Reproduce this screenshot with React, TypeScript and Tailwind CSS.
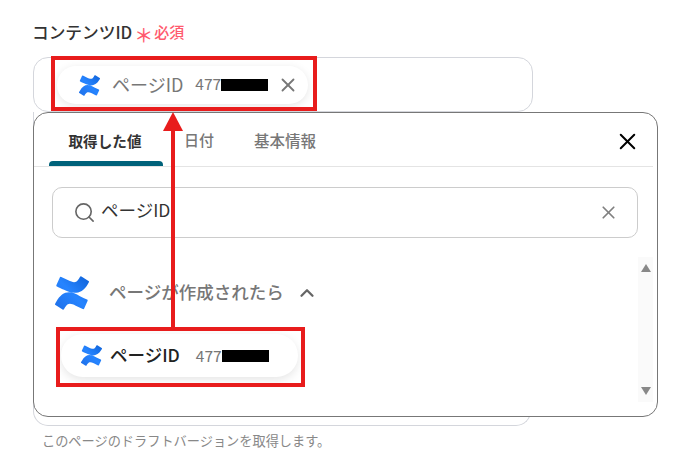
import { useId } from "react";
import { X, Search, ChevronUp } from "lucide-react";

const font = { fontFamily: '"Noto Sans CJK JP", "Noto Sans", sans-serif' };

function ConfluenceLogo({ className }: { className: string }) {
  const id = useId();
  return (
    <svg viewBox="0 0 24 24" className={className}>
      <defs>
        <linearGradient id={id} x1="0" y1="1" x2="1" y2="0">
          <stop offset="0" stopColor="#1f6fe8" />
          <stop offset="0.5" stopColor="#2684ff" />
          <stop offset="1" stopColor="#0f62d8" />
        </linearGradient>
      </defs>
      <path
        fill={`url(#${id})`}
        d="M.87 18.257c-.248.382-.53.875-.763 1.245a.764.764 0 0 0 .255 1.04l4.965 3.054a.764.764 0 0 0 1.058-.26c.199-.332.454-.763.733-1.221 1.967-3.247 3.945-2.853 7.508-1.146l4.957 2.337a.764.764 0 0 0 1.028-.382l2.364-5.346a.764.764 0 0 0-.382-1 599.851 599.851 0 0 1-4.965-2.361C10.911 9.861 5.16 10.1.87 18.257zM23.131 5.743c.248-.382.53-.875.763-1.245a.764.764 0 0 0-.256-1.04L18.673.404a.764.764 0 0 0-1.058.26c-.199.332-.454.763-.733 1.221-1.967 3.247-3.945 2.853-7.508 1.146L4.417.694a.764.764 0 0 0-1.028.382L1.025 6.422a.764.764 0 0 0 .382 1c1.04.49 3.11 1.472 4.965 2.361 6.712 3.355 12.47 3.116 16.759-4.04z"
      />
    </svg>
  );
}

function Redacted() {
  return <span className="h-[12px] w-[47px] bg-black" />;
}

function Dropdown() {
  return (
    <div className="absolute left-[33px] top-[112px] h-[305px] w-[625px] rounded-[15px] border border-[#777777] bg-white">
      {/* tabs */}
      <div className="relative mr-[4px] flex h-[54px] items-start border-b border-[#e4e4e4] pl-[15px]">
        <div className="flex h-[53px] w-[114px] items-center justify-center pt-[2px] pr-[2px] text-[14.6px] font-bold text-[#333333]">
          取得した値
        </div>
        <div className="ml-[21px] flex h-[53px] items-center pt-[2px] text-[15px] font-medium text-[#777777]">日付</div>
        <div className="ml-[40px] flex h-[53px] items-center pt-[2px] text-[15.5px] font-medium text-[#777777]">基本情報</div>
        <div className="absolute left-[15px] top-[48px] h-[5px] w-[114px] rounded-t-[4px] bg-[#00627a]" />
        <X className="absolute left-[580px] top-[15px] h-[27px] w-[27px] text-black" strokeWidth={1.8} />
      </div>

      {/* search */}
      <div className="ml-[18px] mt-[20px] flex h-[51px] w-[586px] items-center rounded-[10px] border border-[#cccccc] pl-[20px]">
        <Search className="h-[23px] w-[23px] text-[#666666]" strokeWidth={1.7} />
        <span className="mb-[6px] ml-[5px] text-[17.5px] leading-[24px] text-[#333333]">ページID</span>
        <X className="ml-auto mr-[18px] h-[21px] w-[21px] text-[#808080]" strokeWidth={2} />
      </div>

      {/* group header */}
      <div className="ml-[21px] mt-[38px] flex h-[34px] items-center">
        <ConfluenceLogo className="h-[34px] w-[34px]" />
        <span className="mb-[2px] ml-[20px] text-[17.5px] leading-[24px] font-medium text-[#777777]">ページが作成されたら</span>
        <ChevronUp className="ml-[12px] h-[22px] w-[22px] text-[#666666]" strokeWidth={2.5} />
      </div>

      {/* result chip */}
      <div className="ml-[27px] mt-[24px] flex h-[43px] w-[237px] items-center rounded-full bg-white pl-[20px] shadow-[0_3px_10px_rgba(0,0,0,0.1)]">
        <ConfluenceLogo className="h-[21px] w-[21px]" />
        <span className="mb-[2px] ml-[8px] text-[17.5px] leading-[24px] font-medium text-[#222222]">ページID</span>
        <span className="mb-[2px] ml-[16px] text-[15.5px] leading-[20px] text-[#777777]">477</span>
        <Redacted />
      </div>

      {/* scrollbar */}
      <div className="absolute left-[604px] top-[144px] flex h-[145px] w-[15px] flex-col items-center justify-between bg-[#fafafa] py-[7px]">
        <span className="h-0 w-0 border-x-[5px] border-b-[8px] border-x-transparent border-b-[#888888]" />
        <span className="h-0 w-0 border-x-[5px] border-t-[8px] border-x-transparent border-t-[#888888]" />
      </div>
    </div>
  );
}

function Annotations() {
  return (
    <>
      <div className="absolute left-[51px] top-[56px] h-[55px] w-[266px] border-[4px] border-[#e81c1c]" />
      <div className="absolute left-[56px] top-[327px] h-[60px] w-[249px] border-[4px] border-[#e81c1c]" />
      <div className="absolute left-[171px] top-[128px] h-[200px] w-[4px] bg-[#e81c1c]" />
      <div className="absolute left-[163px] top-[112px] h-0 w-0 border-x-[10px] border-b-[19px] border-x-transparent border-b-[#e81c1c]" />
    </>
  );
}

export default function App() {
  return (
    <div className="relative h-[464px] w-[694px] overflow-hidden bg-white" style={font}>
      <div className="pl-[33px] pt-[20px]">
        <div className="flex h-[24px] items-center">
          <span className="-ml-[1px] text-[16.7px] leading-[24px] font-medium text-[#333333]">コンテンツID</span>
          <span className="ml-[2px] mt-[5px] text-[19px] leading-none font-medium text-[#ff5a6e]">＊</span>
          <span className="ml-[1px] text-[15px] leading-[24px] font-medium text-[#ff5a6e]">必須</span>
        </div>
        <div className="mt-[13px] h-[55px] w-[500px] rounded-[15px] border border-[#d4d6dc] pl-[23px] pt-[8px]">
          <div className="flex h-[38px] w-[251px] items-center rounded-full bg-white pl-[22px] shadow-[0_2px_8px_rgba(0,0,0,0.1)]">
            <ConfluenceLogo className="h-[21px] w-[21px]" />
            <span className="mb-[3px] ml-[12px] text-[18px] leading-[24px] text-[#777777]">ページID</span>
            <span className="mb-[4px] ml-[12px] text-[15.5px] leading-[20px] text-[#777777]">477</span>
            <Redacted />
            <X className="ml-[9px] h-[22px] w-[22px] text-[#777777]" strokeWidth={2} />
          </div>
        </div>
        {/* next field, mostly behind the dropdown */}
        <div className="h-[314px] w-[498px] rounded-b-[15px] border border-t-0 border-[#d4d6dc]" />
        <p className="ml-[9px] mt-[5px] text-[13.2px] leading-[20px] text-[#888888]">このページのドラフトバージョンを取得します。</p>
      </div>
      <Dropdown />
      <Annotations />
    </div>
  );
}
